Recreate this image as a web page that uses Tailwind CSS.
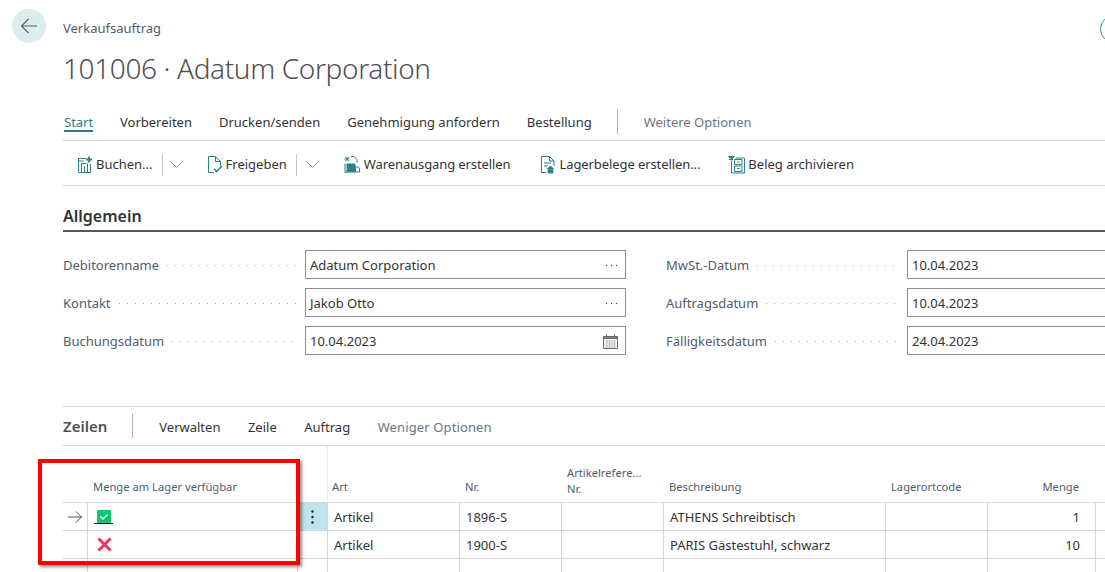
<!DOCTYPE html>
<html lang="de">
<head>
  <meta charset="UTF-8" />
  <title>Verkaufsauftrag</title>
  <script src="https://cdn.jsdelivr.net/npm/@tailwindcss/browser@4"></script>
</head>
<body class="bg-white overflow-hidden">
  <div class="relative w-[1105px] h-[572px] overflow-hidden font-['Noto_Sans','Open_Sans',sans-serif] text-[13px] text-[#333]">

    <!-- page header -->
    <div class="flex w-[1140px] h-[104px]">
      <div class="w-[63px] shrink-0 pl-3 pt-[9px]">
        <div class="w-[34px] h-[34px] rounded-full bg-[#dcedf0] flex items-center justify-center">
          <svg class="w-[18px] h-[18px]" viewBox="0 0 18 18" fill="none" stroke="#555e66" stroke-width="1.1"><path d="M1.5 9H17M8.5 2L1.5 9l7 7"/></svg>
        </div>
      </div>
      <div class="flex-1 pt-[19px]">
        <div class="text-[#505c6d] leading-[18px]">Verkaufsauftrag</div>
        <div class="text-[28px] tracking-[-0.37px] leading-[40px] mt-[11px] font-light text-[#505050]">101006 · Adatum Corporation</div>
      </div>
      <div class="w-[28px] h-[28px] mt-[15px] mr-[12px] rounded-full border border-[#2f8f98] shrink-0"></div>
    </div>

    <!-- tabs -->
    <div class="ml-[63px] h-[37px] border-b border-[#d5d5d5] flex items-start">
      <div class="flex gap-[27px] pt-[9px] leading-[18px]">
        <div class="text-[#2a7f88] border-b-2 border-[#2a7f88] h-[19px] w-[29px] ml-px whitespace-nowrap">Start</div>
        <div>Vorbereiten</div>
        <div>Drucken/senden</div>
        <div>Genehmigung anfordern</div>
        <div>Bestellung</div>
      </div>
      <div class="w-px h-[24px] bg-[#b0b4b8] ml-[25px] mt-[6px]"></div>
      <div class="ml-[26px] pt-[9px] leading-[18px] text-[#6a7583]">Weitere Optionen</div>
    </div>

    <!-- actions -->
    <div class="ml-[63px] h-[45px] border-b border-[#d5d5d5] flex items-center pl-[14px] pt-[3px]">
      <svg class="w-[15px] h-[18px]" viewBox="0 0 15 18" fill="none" stroke="#2a7f88"><path d="M9 2.500H1.500v14h12V8M4.500 7.500h5M4.500 7.500v9M7.500 10v6.500M10.500 7.500v9M1.500 5h5"/><path d="M12 .5v6M9 3.500h6" stroke-width="1.800"/></svg>
      <span class="ml-[4px]">Buchen...</span>
      <div class="w-px h-[22px] bg-[#c4c4c4] ml-[9px]"></div>
      <svg class="w-[13px] h-[7px] ml-[7px]" viewBox="0 0 13 7" fill="none" stroke="#8a8a8a"><path d="M.5.500l6 6 6-6"/></svg>
      <svg class="w-[15px] h-[18px] ml-[25px]" viewBox="0 0 15 18" fill="none" stroke="#2a7f88"><path d="M6 16.500H.5V.5h7l5 5V10M7.500.5v5h5"/><path d="M6 13l2.500 2.500L14 10" stroke-width="1.500"/></svg>
      <span class="ml-[3px]">Freigeben</span>
      <div class="w-px h-[22px] bg-[#c4c4c4] ml-[9px]"></div>
      <svg class="w-[13px] h-[7px] ml-[9px]" viewBox="0 0 13 7" fill="none" stroke="#8a8a8a"><path d="M.5.500l6 6 6-6"/></svg>
      <svg class="w-[16px] h-[18px] ml-[25px]" viewBox="0 0 16 18" fill="none" stroke="#2a7f88"><path d="M1 1l4 4M5 1L1 5M3 .5v5M.5 3h5" stroke-width=".8"/><path d="M7 .5h3l3 3v3M1 7.500v9h2"/><path d="M3 8h8v8H3z" fill="#2a7f88"/><path d="M11.500 11h3l1 2v3h-4z"/></svg>
      <span class="ml-[4px] tracking-[-0.1px]">Warenausgang erstellen</span>
      <svg class="w-[14px] h-[18px] ml-[30px]" viewBox="0 0 14 18" fill="none" stroke="#2a7f88"><path d="M.5 16.500V.5h8l4.500 4.500v5M8.500.5V5H13M3 7h7M3 10h4M.5 16.500H5"/><path d="M6 13l3.500-3 3.500 3M7 13.500h5v3.500H7z" fill="#2a7f88" stroke-width=".7"/></svg>
      <span class="ml-[5px] tracking-[-0.09px]">Lagerbelege erstellen...</span>
      <svg class="w-[17px] h-[18px] ml-[28px]" viewBox="0 0 17 18" fill="none" stroke="#2a7f88"><path d="M.5.500h6l-3 2.500z" fill="#2a7f88"/><path d="M1 3.500h4M3.500 4.500v12.500h13V2h-9"/><path d="M6.500 3.500h7.500v5H6.500zM6.500 10h7.500v5.500H6.500zM9 6h2.500M9 12.500h2.500"/></svg>
      <span class="ml-[3px]">Beleg archivieren</span>
    </div>

    <!-- Allgemein -->
    <div class="ml-[63px] h-[46px] pt-[19px] border-b-2 border-[#505a65]">
      <div class="text-[16px] font-semibold leading-[22px]">Allgemein</div>
    </div>

    <div class="ml-[63px] mt-[18px] w-[1165px] grid grid-cols-[563px_562px] gap-x-[40px] gap-y-[9px]">
      <div class="flex items-center h-[29px]">
        <span class="text-[#505c6d] mr-[8px] pt-[2px]">Debitorenname</span>
        <div class="flex-1 h-px mt-[2px] mr-[7px] bg-[repeating-linear-gradient(90deg,#b8b8b8_0_1px,transparent_1px_8px)]"></div>
        <div class="w-[321px] h-full border border-[#8a8f96] pl-[4px] pr-[7px] flex items-center justify-between">
          <span class="pt-[2px]">Adatum Corporation</span>
          <svg class="w-[13px] h-[3px] mt-[2px]" viewBox="0 0 13 3" fill="#444"><circle cx="1.500" cy="1.500" r=".7"/><circle cx="6.500" cy="1.500" r=".7"/><circle cx="11.500" cy="1.500" r=".7"/></svg>
        </div>
      </div>
      <div class="flex items-center h-[29px]">
        <span class="text-[#505c6d] mr-[8px] pt-[2px]">MwSt.-Datum</span>
        <div class="flex-1 h-px mt-[2px] mr-[7px] bg-[repeating-linear-gradient(90deg,#b8b8b8_0_1px,transparent_1px_8px)]"></div>
        <div class="w-[321px] h-full border border-[#8a8f96] pl-[4px] flex items-center"><span class="pt-[2px]">10.04.2023</span></div>
      </div>
      <div class="flex items-center h-[29px]">
        <span class="text-[#505c6d] mr-[8px] pt-[2px]">Kontakt</span>
        <div class="flex-1 h-px mt-[2px] mr-[7px] bg-[repeating-linear-gradient(90deg,#b8b8b8_0_1px,transparent_1px_8px)]"></div>
        <div class="w-[321px] h-full border border-[#8a8f96] pl-[4px] pr-[7px] flex items-center justify-between">
          <span class="pt-[2px]">Jakob Otto</span>
          <svg class="w-[13px] h-[3px] mt-[2px]" viewBox="0 0 13 3" fill="#444"><circle cx="1.500" cy="1.500" r=".7"/><circle cx="6.500" cy="1.500" r=".7"/><circle cx="11.500" cy="1.500" r=".7"/></svg>
        </div>
      </div>
      <div class="flex items-center h-[29px]">
        <span class="text-[#505c6d] mr-[8px] pt-[2px]">Auftragsdatum</span>
        <div class="flex-1 h-px mt-[2px] mr-[7px] bg-[repeating-linear-gradient(90deg,#b8b8b8_0_1px,transparent_1px_8px)]"></div>
        <div class="w-[321px] h-full border border-[#8a8f96] pl-[4px] flex items-center"><span class="pt-[2px]">10.04.2023</span></div>
      </div>
      <div class="flex items-center h-[29px]">
        <span class="text-[#505c6d] mr-[8px] pt-[2px]">Buchungsdatum</span>
        <div class="flex-1 h-px mt-[2px] mr-[7px] bg-[repeating-linear-gradient(90deg,#b8b8b8_0_1px,transparent_1px_8px)]"></div>
        <div class="w-[321px] h-full border border-[#8a8f96] pl-[4px] pr-[7px] flex items-center justify-between"><span class="pt-[2px]">10.04.2023</span>
          <svg class="w-[15px] h-[15px] mt-[1px]" viewBox="0 0 15 15" fill="none" stroke="#666"><path d="M.5 2.500h14v12H.5z"/><path d="M.5 2.500h14v2H.5z" fill="#888"/><path d="M3.500.5v2M11.500.5v2"/><path d="M2 7h11M2 9h11M2 11h11M2 13h11M4 6v8M6.500 6v8M9 6v8M11.500 6v8" stroke="#b5b5b5" stroke-width=".7"/></svg>
        </div>
      </div>
      <div class="flex items-center h-[29px]">
        <span class="text-[#505c6d] mr-[8px] pt-[2px]">Fälligkeitsdatum</span>
        <div class="flex-1 h-px mt-[2px] mr-[7px] bg-[repeating-linear-gradient(90deg,#b8b8b8_0_1px,transparent_1px_8px)]"></div>
        <div class="w-[321px] h-full border border-[#8a8f96] pl-[4px] flex items-center"><span class="pt-[2px]">24.04.2023</span></div>
      </div>
    </div>

    <!-- Zeilen -->
    <div class="ml-[63px] mt-[51px] h-[40px] border-t border-b border-[#d5d5d5] flex items-center">
      <span class="text-[15px] font-semibold text-[#505050]">Zeilen</span>
      <div class="w-px h-[24px] bg-[#b0b4b8] ml-[25px]"></div>
      <div class="flex gap-[27.5px] ml-[26px] mt-[4px]">
        <span>Verwalten</span>
        <span>Zeile</span>
        <span>Auftrag</span>
        <span class="text-[#6a7583] tracking-[0.12px]">Weniger Optionen</span>
      </div>
    </div>

    <!-- lines table -->
    <div class="ml-[63px] grid grid-cols-[25px_209px_30px_132px_102px_102px_222px_102px_108px_10px] grid-rows-[56px_28px_28px_14px] text-[#333]">
      <!-- header -->
      <div></div>
      <div class="flex items-end pb-[7px] pl-[5px] text-[11.2px] leading-[16px] text-[#505c6d] col-span-2">Menge am Lager verfügbar</div>
      <div class="flex items-end pb-[7px] pl-[4px] text-[11.2px] leading-[16px] text-[#505c6d] border-l border-[#ececec]">Art</div>
      <div class="flex items-end pb-[7px] pl-[6px] text-[11.2px] leading-[16px] text-[#505c6d]">Nr.</div>
      <div class="flex items-end pb-[5px] pl-[6px] text-[11.2px] leading-[16px] text-[#505c6d]"><span>Artikelrefere...<br />Nr.</span></div>
      <div class="flex items-end pb-[7px] pl-[6px] text-[11.2px] leading-[16px] text-[#505c6d]">Beschreibung</div>
      <div class="flex items-end pb-[7px] pl-[6px] text-[11.2px] leading-[16px] text-[#505c6d]">Lagerortcode</div>
      <div class="flex items-end justify-end pb-[7px] pr-[16px] text-[11.2px] leading-[16px] text-[#505c6d]">Menge</div>
      <div></div>

      <!-- row 1 -->
      <div class="border-t border-r border-[#d5d5d5] flex items-center justify-center">
        <svg class="w-[14px] h-[12px]" viewBox="0 0 14 12" fill="none" stroke="#505050"><path d="M0 6h13.500M8 .5L13.500 6 8 11.500"/></svg>
      </div>
      <div class="border-t border-[#d5d5d5] pl-[6px] pt-[7px]">
        <div class="w-[19px] h-[14px] border-b border-[#222] pl-[3px]">
          <svg class="w-[14px] h-[13px] block" viewBox="0 0 14 13"><rect width="14" height="13" rx="1" fill="#12c46b"/><path d="M3.500 6.500l2.500 2.500 4.500-4.500" fill="none" stroke="#fff" stroke-width="1.300"/></svg>
        </div>
      </div>
      <div class="border-t border-l border-[#d5d5d5] bg-[#bfe4ec] flex items-center justify-center">
        <svg class="w-[3px] h-[14px]" viewBox="0 0 3 14" fill="#222"><circle cx="1.500" cy="1.500" r="1.200"/><circle cx="1.500" cy="7" r="1.200"/><circle cx="1.500" cy="12.500" r="1.200"/></svg>
      </div>
      <div class="border-t border-l border-[#d5d5d5] pl-[6px] pt-[2px] flex items-center">Artikel</div>
      <div class="border-t border-l border-[#d5d5d5] pl-[6px] pt-[2px] flex items-center">1896-S</div>
      <div class="border-t border-l border-[#d5d5d5]"></div>
      <div class="border-t border-l border-[#d5d5d5] pl-[6px] pt-[2px] flex items-center">ATHENS Schreibtisch</div>
      <div class="border-t border-l border-[#d5d5d5]"></div>
      <div class="border-t border-l border-[#d5d5d5] pr-[15px] pt-[2px] flex items-center justify-end">1</div>
      <div class="border-t border-l border-[#d5d5d5]"></div>

      <!-- row 2 -->
      <div class="border-t border-r border-[#d5d5d5]"></div>
      <div class="border-t border-[#d5d5d5] pl-[9px] flex items-center">
        <svg class="w-[15px] h-[15px]" viewBox="0 0 15 15" fill="none" stroke="#f0345e" stroke-width="3"><path d="M1.500 1.500l12 12M13.500 1.500l-12 12"/></svg>
      </div>
      <div class="border-t border-l border-[#d5d5d5]"></div>
      <div class="border-t border-l border-[#d5d5d5] pl-[6px] pt-[2px] flex items-center">Artikel</div>
      <div class="border-t border-l border-[#d5d5d5] pl-[6px] pt-[2px] flex items-center">1900-S</div>
      <div class="border-t border-l border-[#d5d5d5]"></div>
      <div class="border-t border-l border-[#d5d5d5] pl-[6px] pt-[2px] flex items-center">PARIS Gästestuhl, schwarz</div>
      <div class="border-t border-l border-[#d5d5d5]"></div>
      <div class="border-t border-l border-[#d5d5d5] pr-[15px] pt-[2px] flex items-center justify-end">10</div>
      <div class="border-t border-l border-[#d5d5d5]"></div>

      <!-- row 3, cut off -->
      <div class="border-t border-r border-[#d5d5d5]"></div>
      <div class="border-t border-[#d5d5d5]"></div>
      <div class="border-t border-l border-[#d5d5d5]"></div>
      <div class="border-t border-l border-[#d5d5d5]"></div>
      <div class="border-t border-l border-[#d5d5d5]"></div>
      <div class="border-t border-l border-[#d5d5d5]"></div>
      <div class="border-t border-l border-[#d5d5d5]"></div>
      <div class="border-t border-l border-[#d5d5d5]"></div>
      <div class="border-t border-l border-[#d5d5d5]"></div>
      <div class="border-t border-l border-[#d5d5d5]"></div>
    </div>

    <!-- red highlight drawn over the screenshot -->
    <div class="absolute left-[38px] top-[459px] w-[262px] h-[106px] border-4 border-[#ff0000] shadow-[2px_2px_3px_rgba(0,0,0,0.45)]"></div>
  </div>
</body>
</html>
